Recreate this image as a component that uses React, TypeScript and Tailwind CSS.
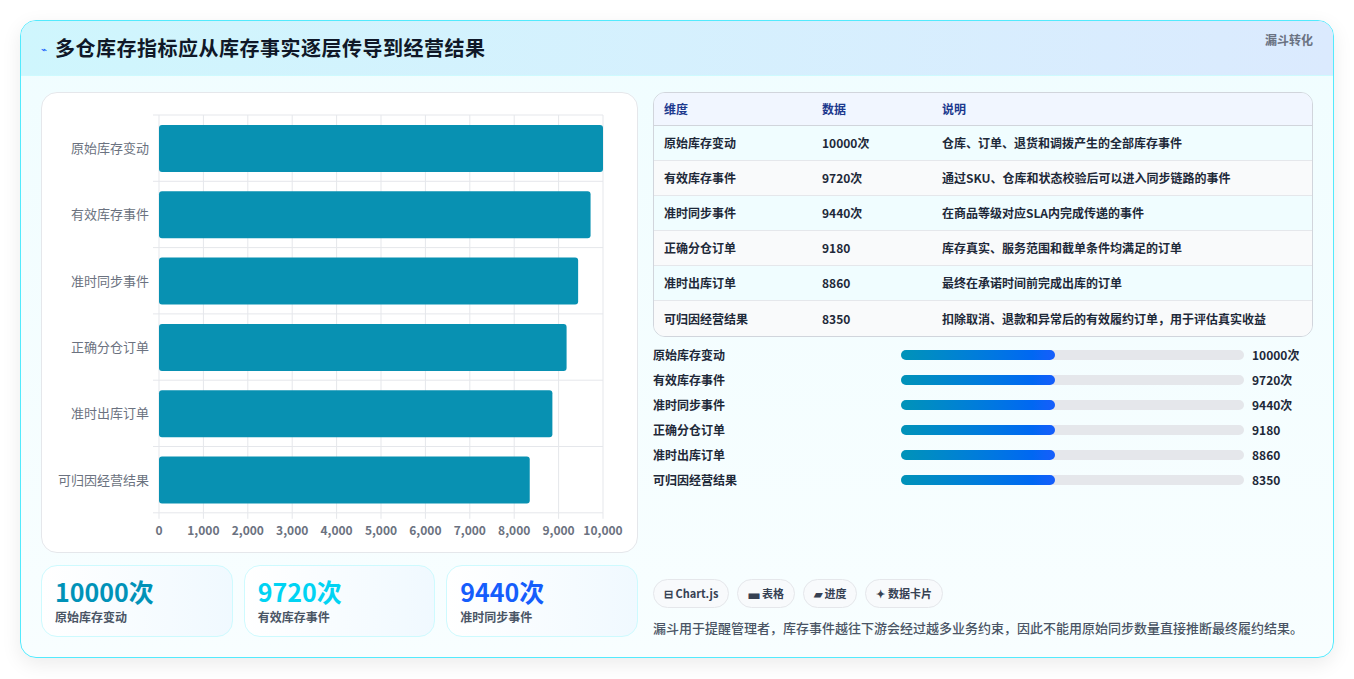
const rows = [
  { name: '原始库存变动', value: 10000, unit: '次', note: '仓库、订单、退货和调拨产生的全部库存事件' },
  { name: '有效库存事件', value: 9720, unit: '次', note: '通过SKU、仓库和状态校验后可以进入同步链路的事件' },
  { name: '准时同步事件', value: 9440, unit: '次', note: '在商品等级对应SLA内完成传递的事件' },
  { name: '正确分仓订单', value: 9180, unit: '', note: '库存真实、服务范围和截单条件均满足的订单' },
  { name: '准时出库订单', value: 8860, unit: '', note: '最终在承诺时间前完成出库的订单' },
  { name: '可归因经营结果', value: 8350, unit: '', note: '扣除取消、退款和异常后的有效履约订单，用于评估真实收益' },
];

function BarChart() {
  const x0 = 117;
  const w = 444;
  const top = 22;
  const rowH = 66.3;
  return (
    <svg width="597" height="461" className="block">
      {Array.from({ length: 11 }).map((_, i) => {
        const x = x0 + (w * i) / 10;
        return (
          <g key={i}>
            <line x1={x} x2={x} y1={top} y2={top + rowH * 6} stroke="#e5e7eb" />
            <line x1={x} x2={x} y1={top + rowH * 6} y2={top + rowH * 6 + 6} stroke="#e5e7eb" />
            <text x={x} y={442} textAnchor="middle" fontSize="12" fontWeight="600" fill="#6b7280">
              {(i * 1000).toLocaleString('en-US')}
            </text>
          </g>
        );
      })}
      {Array.from({ length: 7 }).map((_, i) => (
        <line key={i} x1={x0 - 6} x2={x0 + w} y1={top + rowH * i} y2={top + rowH * i} stroke="#e5e7eb" />
      ))}
      {rows.map((r, i) => {
        const y = top + rowH * i + 10;
        return (
          <g key={r.name}>
            <rect x={x0} y={y} width={(w * r.value) / 10000} height={47} rx="3" fill="#0891b2" />
            <text x={x0 - 10} y={y + 28} textAnchor="end" fontSize="13" fill="#6b7280">
              {r.name}
            </text>
          </g>
        );
      })}
    </svg>
  );
}

export default function App() {
  return (
    <div
      className="min-h-[679px] bg-white p-5"
      style={{ fontFamily: '"Noto Sans CJK SC", "Noto Sans", sans-serif' }}
    >
      <div className="overflow-hidden rounded-2xl border border-cyan-300 bg-gradient-to-b from-[#f0fdff] to-[#f8feff] shadow-[0_6px_20px_rgba(0,0,0,0.08)]">
        {/* Header */}
        <div className="flex h-[55px] items-center justify-between border-b border-cyan-100 bg-gradient-to-r from-[#cff6fd] to-[#dbeafe] pl-[20px] pr-5">
          <div className="flex items-center gap-2">
            <span className="text-[10px] text-blue-600">⌁</span>
            <h1 className="text-[20px] font-bold tracking-[0.5px] text-gray-900">多仓库存指标应从库存事实逐层传导到经营结果</h1>
          </div>
          <span className="-mt-4 text-xs font-semibold text-gray-500">漏斗转化</span>
        </div>

        <div className="flex gap-[15px] px-5 pb-5 pt-[16px]">
          {/* Left */}
          <div className="flex w-[597px] flex-col gap-3">
            <div className="h-[461px] rounded-2xl border border-gray-200 bg-white">
              <BarChart />
            </div>
            <div className="flex gap-[11px]">
              {[
                { v: '10000次', l: '原始库存变动', c: 'text-cyan-600' },
                { v: '9720次', l: '有效库存事件', c: 'text-cyan-400' },
                { v: '9440次', l: '准时同步事件', c: 'text-blue-600' },
              ].map((s) => (
                <div key={s.l} className="flex h-[72px] w-[192px] flex-col justify-center rounded-2xl border border-cyan-100 bg-gradient-to-r from-white to-[#f0f9ff] px-[13px]">
                  <div className={`text-[25px] font-bold leading-[28px] ${s.c}`}>{s.v}</div>
                  <div className="mt-[4px] text-xs font-semibold leading-4 text-gray-600">{s.l}</div>
                </div>
              ))}
            </div>
          </div>

          {/* Right */}
          <div className="flex flex-1 flex-col">
            <div className="overflow-hidden rounded-xl border border-gray-300 text-xs font-semibold">
              <div className="flex h-[33px] items-center border-b border-gray-300 bg-[#f1f6ff] text-blue-900">
                <div className="w-[168px] pl-[10px]">维度</div>
                <div className="w-[120px]">数据</div>
                <div>说明</div>
              </div>
              {rows.map((r, i) => (
                <div key={r.name} className={`flex h-[35px] items-center text-gray-800 ${i < 5 ? 'border-b border-gray-200' : ''} ${i % 2 === 0 ? 'bg-[#f0fdff]' : 'bg-[#f9fafb]'}`}>
                  <div className="w-[168px] pl-[10px]">{r.name}</div>
                  <div className="w-[120px]">{r.value}{r.unit}</div>
                  <div>{r.note}</div>
                </div>
              ))}
            </div>

            <div className="mt-[9px] flex flex-col gap-[7px]">
              {rows.map((r) => (
                <div key={r.name} className="flex h-[18px] items-center text-xs font-semibold text-gray-800">
                  <div className="w-[248px]">{r.name}</div>
                  <div className="h-[10px] w-[343px] rounded-full bg-gray-200">
                    <div className="h-full w-[45%] rounded-full bg-gradient-to-r from-cyan-600 to-blue-600" />
                  </div>
                  <div className="ml-2">{r.value}{r.unit}</div>
                </div>
              ))}
            </div>

            <div className="mt-auto flex gap-2">
              {['⊟ Chart.js', '▄ 表格', '▰ 进度', '✦ 数据卡片'].map((c) => (
                <span key={c} className="rounded-full border border-gray-200 bg-[#f8fafc] px-2.5 py-[5px] text-[11px] font-semibold text-gray-700">
                  {c}
                </span>
              ))}
            </div>
            <p className="mt-[10px] text-[13px] font-medium text-gray-600">
              漏斗用于提醒管理者，库存事件越往下游会经过越多业务约束，因此不能用原始同步数量直接推断最终履约结果。
            </p>
          </div>
        </div>
      </div>
    </div>
  );
}
